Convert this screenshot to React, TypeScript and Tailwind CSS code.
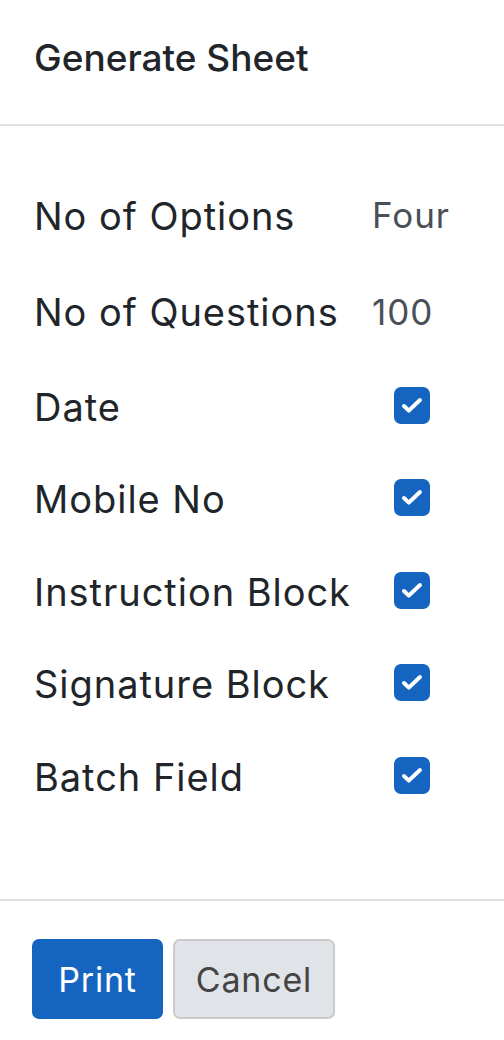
import React from 'react';

const rows: { label: string; value?: string; h: string }[] = [
  { label: 'No of Options', value: 'Four', h: 'h-[97px]' },
  { label: 'No of Questions', value: '100', h: 'h-[96px]' },
  { label: 'Date', h: 'h-[93px]' },
  { label: 'Mobile No', h: 'h-[92px]' },
  { label: 'Instruction Block', h: 'h-[93px]' },
  { label: 'Signature Block', h: 'h-[92px]' },
  { label: 'Batch Field', h: 'h-[93px]' },
];

function CheckBox() {
  return (
    <div className="w-[36px] h-[37px] rounded-[7px] bg-[#1565c0]">
      <svg width="36" height="37" viewBox="0 0 36 37" fill="none">
        <path d="M10 19l4.8 4.6L26 13" stroke="white" strokeWidth="4" strokeLinecap="round" strokeLinejoin="round" />
      </svg>
    </div>
  );
}

export default function App() {
  return (
    <div className="w-[504px] h-[1040px] bg-white font-['Inter',sans-serif] text-[#212529] flex flex-col">
      {/* header */}
      <div className="h-[126px] border-b-2 border-[#dee2e6] px-[34px] pb-[10px] flex items-center">
        <h1 className="text-[37px] font-medium leading-none">Generate Sheet</h1>
      </div>

      {/* body */}
      <div className="flex-1 px-[34px] pt-[41px] tracking-[0.06em]">
        {rows.map((r) => (
          <div key={r.label} className={`${r.h} flex items-center`}>
            <span className="w-[338px] text-[38px] leading-none">{r.label}</span>
            {r.value ? (
              <span className="text-[35px] text-[#495057] leading-none">{r.value}</span>
            ) : (
              <div className="pl-[22px] pb-[3px]">
                <CheckBox />
              </div>
            )}
          </div>
        ))}
      </div>

      {/* footer */}
      <div className="border-t-2 border-[#dee2e6] h-[141px] px-[32px] pt-[38px] flex gap-[10px] items-start tracking-[0.05em]">
        <button className="h-[80px] w-[131px] rounded-[7px] bg-[#1565c0] text-white text-[34px]">Print</button>
        <button className="h-[80px] w-[162px] rounded-[7px] bg-[#e0e3e7] border-2 border-[#cbcbcb] text-[#444] text-[34px]">Cancel</button>
      </div>
    </div>
  );
}
